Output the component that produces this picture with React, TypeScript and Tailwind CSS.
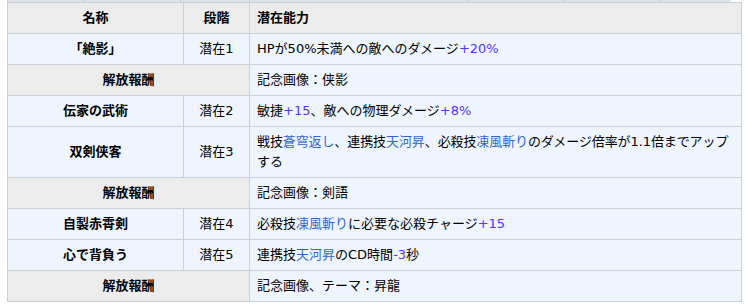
import React from "react";

const L = ({ children }: { children: React.ReactNode }) => (
  <span className="text-[#3366cc]">{children}</span>
);
const V = ({ children }: { children: React.ReactNode }) => (
  <span className="text-[#5533ff]">{children}</span>
);

const td = "border border-[#c8d0da] px-[7px] py-[5px] leading-[20px]";
const nameCell = `${td} bg-[#eef5ff] text-center font-bold`;
const stepCell = `${td} bg-[#eef5ff] text-center`;
const abilCell = `${td} bg-[#eef5ff] text-left`;
const rewardCell = `${td} bg-[#ececec] text-center font-bold`;

export default function App() {
  const strip = [7, 83, 180, 249, 468, 564, 659, 731];
  return (
    <div
      className="w-[745px] h-[304px] bg-white text-black text-[13px] overflow-hidden"
      style={{ fontFamily: '"DejaVu Sans", "Noto Sans CJK JP", sans-serif' }}
    >
      <div className="flex h-[2px] ml-[7px] w-[724px]">
        {strip.slice(0, -1).map((x, i) => (
          <div
            key={i}
            className="h-[2px] bg-[#dde3ea] border-l border-[#c8d0da]"
            style={{ width: strip[i + 1] - x }}
          />
        ))}
      </div>
      <table className="ml-[7px] border-collapse table-fixed w-[734px]">
        <colgroup>
          <col className="w-[176px]" />
          <col className="w-[66px]" />
          <col className="w-[492px]" />
        </colgroup>
        <tbody>
          <tr>
            <th className={`${td} bg-[#ececec] text-center font-bold`}>名称</th>
            <th className={`${td} bg-[#ececec] text-center font-bold`}>段階</th>
            <th className={`${td} bg-[#ececec] text-left font-bold`}>潜在能力</th>
          </tr>
          <tr>
            <td className={nameCell}>「絶影」</td>
            <td className={stepCell}>潜在1</td>
            <td className={abilCell}>
              HPが50%未満への敵へのダメージ<V>+20%</V>
            </td>
          </tr>
          <tr>
            <td className={rewardCell} colSpan={2}>解放報酬</td>
            <td className={abilCell}>記念画像：侠影</td>
          </tr>
          <tr>
            <td className={nameCell}>伝家の武術</td>
            <td className={stepCell}>潜在2</td>
            <td className={abilCell}>
              敏捷<V>+15</V>、敵への物理ダメージ<V>+8%</V>
            </td>
          </tr>
          <tr>
            <td className={nameCell}>双剣侠客</td>
            <td className={stepCell}>潜在3</td>
            <td className={abilCell}>
              <span className="whitespace-nowrap tracking-[-0.1px]">
                戦技<L>蒼穹返し</L>、連携技<L>天河昇</L>、必殺技<L>凍風斬り</L>のダメージ倍率が1.1倍までアップ
              </span>
              <br />
              する
            </td>
          </tr>
          <tr>
            <td className={rewardCell} colSpan={2}>解放報酬</td>
            <td className={abilCell}>記念画像：剣語</td>
          </tr>
          <tr>
            <td className={nameCell}>自製赤霄剣</td>
            <td className={stepCell}>潜在4</td>
            <td className={abilCell}>
              必殺技<L>凍風斬り</L>に必要な必殺チャージ<V>+15</V>
            </td>
          </tr>
          <tr>
            <td className={nameCell}>心で背負う</td>
            <td className={stepCell}>潜在5</td>
            <td className={abilCell}>
              連携技<L>天河昇</L>のCD時間<V>-3</V>秒
            </td>
          </tr>
          <tr>
            <td className={rewardCell} colSpan={2}>解放報酬</td>
            <td className={abilCell}>記念画像、テーマ：昇龍</td>
          </tr>
        </tbody>
      </table>
    </div>
  );
}
